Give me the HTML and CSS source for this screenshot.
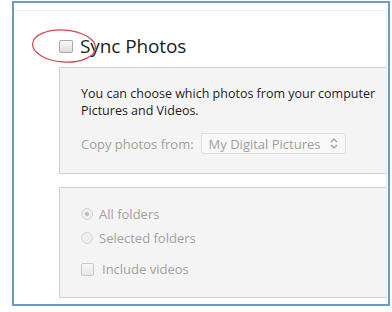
FILE: index.html
```html
<!DOCTYPE html>
<html>
<head>
<meta charset="utf-8">
<link rel="stylesheet" href="styles.css">
</head>
<body>
<div class="frame">
  <div class="inner">
    <div class="sync-row">
      <span class="chk big"></span>
      <span class="title">Sync Photos</span>
      <svg class="ring" width="70" height="40" viewBox="0 0 70 40"><ellipse cx="34" cy="18" rx="31.5" ry="16" transform="rotate(4 34 18)" fill="none" stroke="#d9414b" stroke-width="1.2"/></svg>
    </div>
    <div class="panel p1">
      <p class="desc">You can choose which photos from your computer</p>
      <p class="desc">Pictures and Videos.</p>
      <div class="copy-row">
        <span class="muted">Copy photos from:</span>
        <span class="select">My Digital Pictures
          <svg class="updown" width="8" height="11" viewBox="0 0 8 11"><path d="M1 4 L4 1 L7 4 M1 7 L4 10 L7 7" fill="none" stroke="#9a9a9a" stroke-width="1.1"/></svg>
        </span>
      </div>
    </div>
    <div class="panel p2">
      <div class="opt"><span class="radio on"></span><span class="muted">All folders</span></div>
      <div class="opt"><span class="radio"></span><span class="muted">Selected folders</span></div>
      <div class="opt vid"><span class="chk"></span><span class="muted">Include videos</span></div>
    </div>
  </div>
</div>
</body>
</html>
```
FILE: styles.css
```css
html, body { margin: 0; padding: 0; background: #fff; }
body { font-family: "Open Sans", "Noto Sans", sans-serif; width: 392px; height: 312px; overflow: hidden; }
.frame {
  margin: 1px 0 0 12px;
  width: 374px;
  height: 301px;
  border: 2px solid #6c9bc8;
  overflow: hidden;
  background: #fff;
}
.inner {
  margin-top: 7px;
  border-top: 1px solid #e7edf3;
  border-right: 1px solid #e7edf3;
  width: 373px;
  height: 300px;
  padding-left: 45px;
  box-sizing: border-box;
  overflow: hidden;
}
.sync-row {
  position: relative;
  display: flex;
  align-items: center;
  height: 30px;
  margin-top: 20px;
}
.ring { position: absolute; left: -29px; top: -3px; }
.chk {
  display: inline-block;
  width: 10px; height: 10px;
  border: 1px solid #c9c9c9;
  border-radius: 2px;
  background: linear-gradient(#f7f7f7, #e6e6e6);
  flex: none;
}
.chk.big { width: 12px; height: 11px; border-color: #a9a9a9; background: linear-gradient(#fafafa, #dcdcdc); }
.title { font-size: 19px; color: #1c1c1c; margin-left: 7px; letter-spacing: -0.1px; }
.panel {
  background: #f5f4f4;
  border: 1px solid #cfcfcf;
  width: 400px;
  box-sizing: border-box;
}
.p1 { margin-top: 6px; height: 107px; padding: 17px 0 0 21px; }
.desc { margin: 0; font-size: 12.5px; line-height: 17px; color: #1e1e1e; white-space: nowrap; }
.copy-row { display: flex; align-items: center; margin-top: 14px; }
.muted { color: #a2a2a2; font-size: 13px; white-space: nowrap; }
.select {
  margin-left: 7px;
  display: flex; align-items: center; justify-content: space-between;
  width: 145px; height: 21px;
  box-sizing: border-box;
  border: 1px solid #dedede;
  border-radius: 2px;
  background: #f8f8f8;
  padding: 0 7px 0 7px;
  color: #a0a0a0; font-size: 13px;
  white-space: nowrap;
}
.p2 { margin-top: 13px; height: 111px; padding: 14px 0 0 21px; }
.opt { display: flex; align-items: center; height: 24px; }
.radio {
  display: inline-block; position: relative;
  width: 10px; height: 10px; border-radius: 50%;
  border: 1px solid #d6d6d6; background: #eeeeee;
  margin-right: 6px;
  flex: none;
}
.radio.on::after {
  content: ""; position: absolute; left: 3px; top: 3px;
  width: 4px; height: 4px; border-radius: 50%; background: #b8b8b8;
}
.opt.vid { margin-top: 7px; }
.opt.vid .chk { margin-right: 8px; width: 11px; height: 11px; }
```
